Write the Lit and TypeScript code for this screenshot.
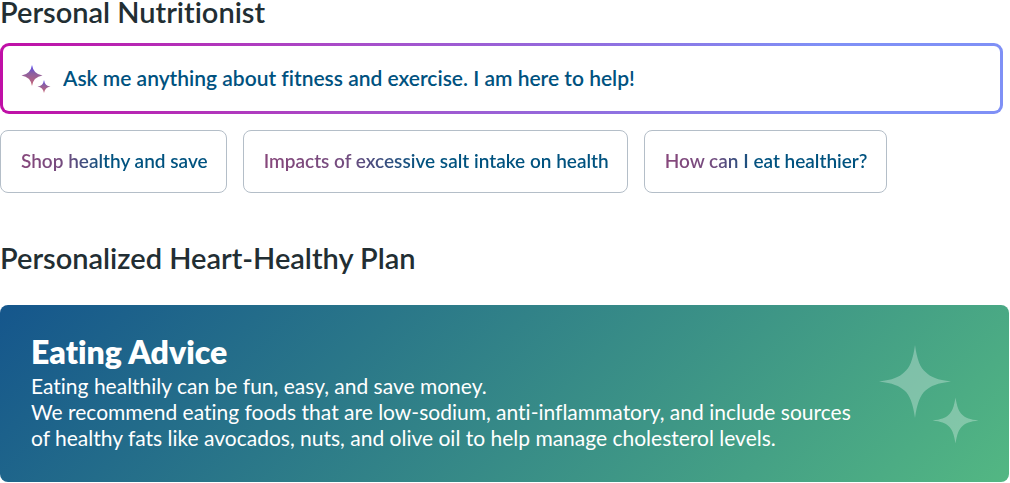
import { LitElement, html, css } from "lit";
import { customElement, property } from "lit/decorators.js";

@customElement("suggestion-chip")
class SuggestionChip extends LitElement {
  @property() label = "";

  static styles = css`
    :host {
      display: block;
    }
    .chip {
      display: block;
      box-sizing: border-box;
      height: 63px;
      padding: 0 18px 2px 20px;
      border: 1px solid #b4bec8;
      border-radius: 8px;
      background: #fff;
      font: 600 19px/24px Lato, sans-serif;
      font-variant-ligatures: none;
      cursor: pointer;
    }
    .text {
      background: linear-gradient(90deg, #87477b 0%, #734c7f 24%, #00527f 46%, #00527f 100%);
      -webkit-background-clip: text;
      background-clip: text;
      color: transparent;
      white-space: nowrap;
    }
  `;

  render() {
    return html`<button class="chip" type="button"><span class="text">${this.label}</span></button>`;
  }
}

@customElement("app-root")
class AppRoot extends LitElement {
  private suggestions = [
    "Shop healthy and save",
    "Impacts of excessive salt intake on health",
    "How can I eat healthier?",
  ];

  static styles = css`
    :host {
      display: block;
      background: #fff;
      color: #222e33;
      font-family: Lato, sans-serif;
      font-variant-ligatures: none;
    }
    .heading {
      margin: 0;
      font-size: 29px;
      line-height: 24px;
      font-weight: 600;
    }
    .ask {
      display: flex;
      align-items: center;
      gap: 12px;
      box-sizing: border-box;
      height: 71px;
      margin: 19px 7px 0 0;
      padding: 0 20px 0 18px;
      border: 3px solid transparent;
      border-radius: 9px;
      background:
        linear-gradient(#fff, #fff) padding-box,
        linear-gradient(90deg, #c00fa6 0%, #a94bc8 34%, #906fe0 60%, #7f90f6 82%, #7f90f6 100%) border-box;
    }
    .ask-icon {
      flex: none;
      width: 30px;
      height: 30px;
    }
    .ask-input {
      flex: 1;
      min-width: 0;
      padding: 0 0 2px;
      border: 0;
      outline: 0;
      background: none;
      color: #00527f;
      font: 600 21px/28px Lato, sans-serif;
      font-variant-ligatures: none;
    }
    .ask-input::placeholder {
      color: #00527f;
      opacity: 1;
    }
    .chips {
      display: flex;
      flex-wrap: wrap;
      gap: 16px;
      margin: 16px 0 53px;
    }
    .banner {
      display: flex;
      align-items: center;
      justify-content: space-between;
      gap: 24px;
      margin: 35px 1px 1px 0;
      padding: 32px 30px 31px 31px;
      border-radius: 8px;
      background: linear-gradient(135deg, #15568c, #53b783);
      color: #fff;
    }
    .banner-title {
      margin: 0 0 6px;
      font-size: 32px;
      line-height: 30px;
      font-weight: 800;
    }
    .banner-text {
      margin: 0;
      font-size: 21px;
      line-height: 26px;
    }
    .line {
      display: block;
    }
    .banner-icon {
      flex: none;
      width: 100px;
      height: 100px;
    }
  `;

  render() {
    return html`
      <main>
        <h2 class="heading">Personal Nutritionist</h2>
        <label class="ask">
          <svg class="ask-icon" viewBox="0 0 30 30" aria-hidden="true">
            <defs>
              <linearGradient id="spark" x1="0" y1="0" x2="0" y2="1">
                <stop offset="0" stop-color="#5548f5" />
                <stop offset="0.4" stop-color="#8d609f" />
                <stop offset="1" stop-color="#c96473" />
              </linearGradient>
            </defs>
            <path fill="url(#spark)" d="M11 1Q12.400 10.200 21.500 11.500Q12.400 12.800 11 22Q9.600 12.800 .5 11.500Q9.600 10.200 11 1Z" />
            <path fill="url(#spark)" d="M23 16Q23.900 22 29.500 22.500Q23.900 23.400 23 29Q22.100 23.400 16.500 22.500Q22.100 22 23 16Z" />
          </svg>
          <input
            class="ask-input"
            type="text"
            aria-label="Ask the nutritionist"
            placeholder="Ask me anything about fitness and exercise. I am here to help!"
          />
        </label>
        <div class="chips">
          ${this.suggestions.map((s) => html`<suggestion-chip .label=${s}></suggestion-chip>`)}
        </div>
        <h2 class="heading">Personalized Heart-Healthy Plan</h2>
        <section class="banner">
          <div>
            <h3 class="banner-title">Eating Advice</h3>
            <p class="banner-text">
              <span class="line">Eating healthily can be fun, easy, and save money.</span>
              <span class="line">We recommend eating foods that are low-sodium, anti-inflammatory, and include sources</span>
              <span class="line">of healthy fats like avocados, nuts, and olive oil to help manage cholesterol levels.</span>
            </p>
          </div>
          <svg class="banner-icon" viewBox="0 0 100 100" aria-hidden="true">
            <g fill="#fff" fill-opacity="0.3">
              <path d="M36 1C38 16 41.500 24 46.500 28C51.500 33 58.500 36 72 37.500C58.500 39 51.500 42 46.500 46.500C41.500 51 38 59 36 74C34 59 30.500 51 25.500 46.500C20.500 42 13.500 39 0 37.500C13.500 36 20.500 33 25.500 28C30.500 24 34 16 36 1Z" />
              <path d="M76.500 53.500C78 63 80 68 83.500 71C86.500 74 91 75.500 99.500 76.500C91 77.500 86.500 79 83.500 82C80 85 78 90 76.500 99.500C75 90 73 85 69.500 82C66.500 79 62 77.500 53.500 76.500C62 75.500 66.500 74 69.500 71C73 68 75 63 76.500 53.500Z" />
            </g>
          </svg>
        </section>
      </main>
    `;
  }
}
